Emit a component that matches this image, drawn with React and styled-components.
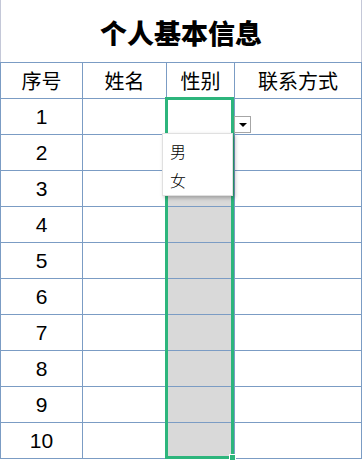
import React from "react";
import styled, { createGlobalStyle } from "styled-components";

const Global = createGlobalStyle`
  html, body { margin: 0; padding: 0; background: #ffffff; }
  body { font-family: "Noto Sans CJK SC", "Liberation Sans", sans-serif; }
`;

const Page = styled.div`
  position: relative;
  width: 363px;
  height: 462px;
  overflow: hidden;
  background: #fff;
`;

const Title = styled.div`
  width: 362px;
  height: 62px;
  box-sizing: border-box;
  border-left: 1px solid #c4c8d8;
  border-right: 1px solid #c4c8d8;
  display: flex;
  align-items: center;
  justify-content: center;
  font-family: "Noto Sans CJK SC", sans-serif;
  font-weight: 900;
  font-size: 27px;
  color: #000;
  padding-top: 2px;
`;

const Grid = styled.div`
  position: relative;
  width: 362px;
  box-sizing: border-box;
  display: grid;
  grid-template-columns: 81px 83px 67px 126px;
  grid-auto-rows: 35px;
  gap: 1px;
  padding: 1px;
  background: #7b9cc4;
`;

const Cell = styled.div`
  background: ${(p) => (p.$shade ? "#d9d9d9" : "#ffffff")};
  display: flex;
  align-items: center;
  justify-content: center;
  font-family: ${(p) =>
    p.$num ? '"Liberation Sans", sans-serif' : '"Noto Sans CJK SC", sans-serif'};
  font-size: ${(p) => (p.$num ? "21px" : "20px")};
  color: #000;
`;

const Selection = styled.div`
  position: absolute;
  left: 165px;
  top: 35px;
  width: 69px;
  height: 362px;
  box-sizing: border-box;
  border: 3px solid #2db57c;
  pointer-events: none;
`;

const Handle = styled.div`
  position: absolute;
  right: -5px;
  bottom: -5px;
  width: 5px;
  height: 5px;
  background: #2db57c;
  border: 1px solid #fff;
`;

const ArrowButton = styled.div`
  position: absolute;
  left: 234px;
  top: 116px;
  width: 17px;
  height: 17px;
  box-sizing: border-box;
  background: #fff;
  border: 1px solid #a6a6a6;
  display: flex;
  align-items: center;
  justify-content: center;
`;

const Triangle = styled.div`
  width: 0;
  height: 0;
  border-left: 4px solid transparent;
  border-right: 4px solid transparent;
  border-top: 4px solid #000;
  margin-top: 1px;
`;

const List = styled.div`
  position: absolute;
  left: 162px;
  top: 133px;
  width: 71px;
  height: 63px;
  box-sizing: border-box;
  background: #fff;
  border: 1px solid #e0e0e0;
  box-shadow: 2px 2px 4px rgba(0, 0, 0, 0.28);
  display: flex;
  flex-direction: column;
  padding-top: 2px;
`;

const Item = styled.div`
  height: 30px;
  display: flex;
  align-items: center;
  padding-left: 7px;
  font-family: "Noto Sans CJK SC", sans-serif;
  font-size: 16px;
  font-weight: 300;
  color: #000;
`;

const headers = ["序号", "姓名", "性别", "联系方式"];

export default function App() {
  const rows = Array.from({ length: 10 }, (_, i) => i + 1);
  return (
    <Page>
      <Global />
      <Title>个人基本信息</Title>
      <Grid>
        {headers.map((h) => (
          <Cell key={h}>{h}</Cell>
        ))}
        {rows.map((n) => (
          <React.Fragment key={n}>
            <Cell $num>{n}</Cell>
            <Cell />
            <Cell $shade={n > 1} />
            <Cell />
          </React.Fragment>
        ))}
        <Selection>
          <Handle />
        </Selection>
      </Grid>
      <ArrowButton>
        <Triangle />
      </ArrowButton>
      <List>
        <Item>男</Item>
        <Item>女</Item>
      </List>
    </Page>
  );
}
